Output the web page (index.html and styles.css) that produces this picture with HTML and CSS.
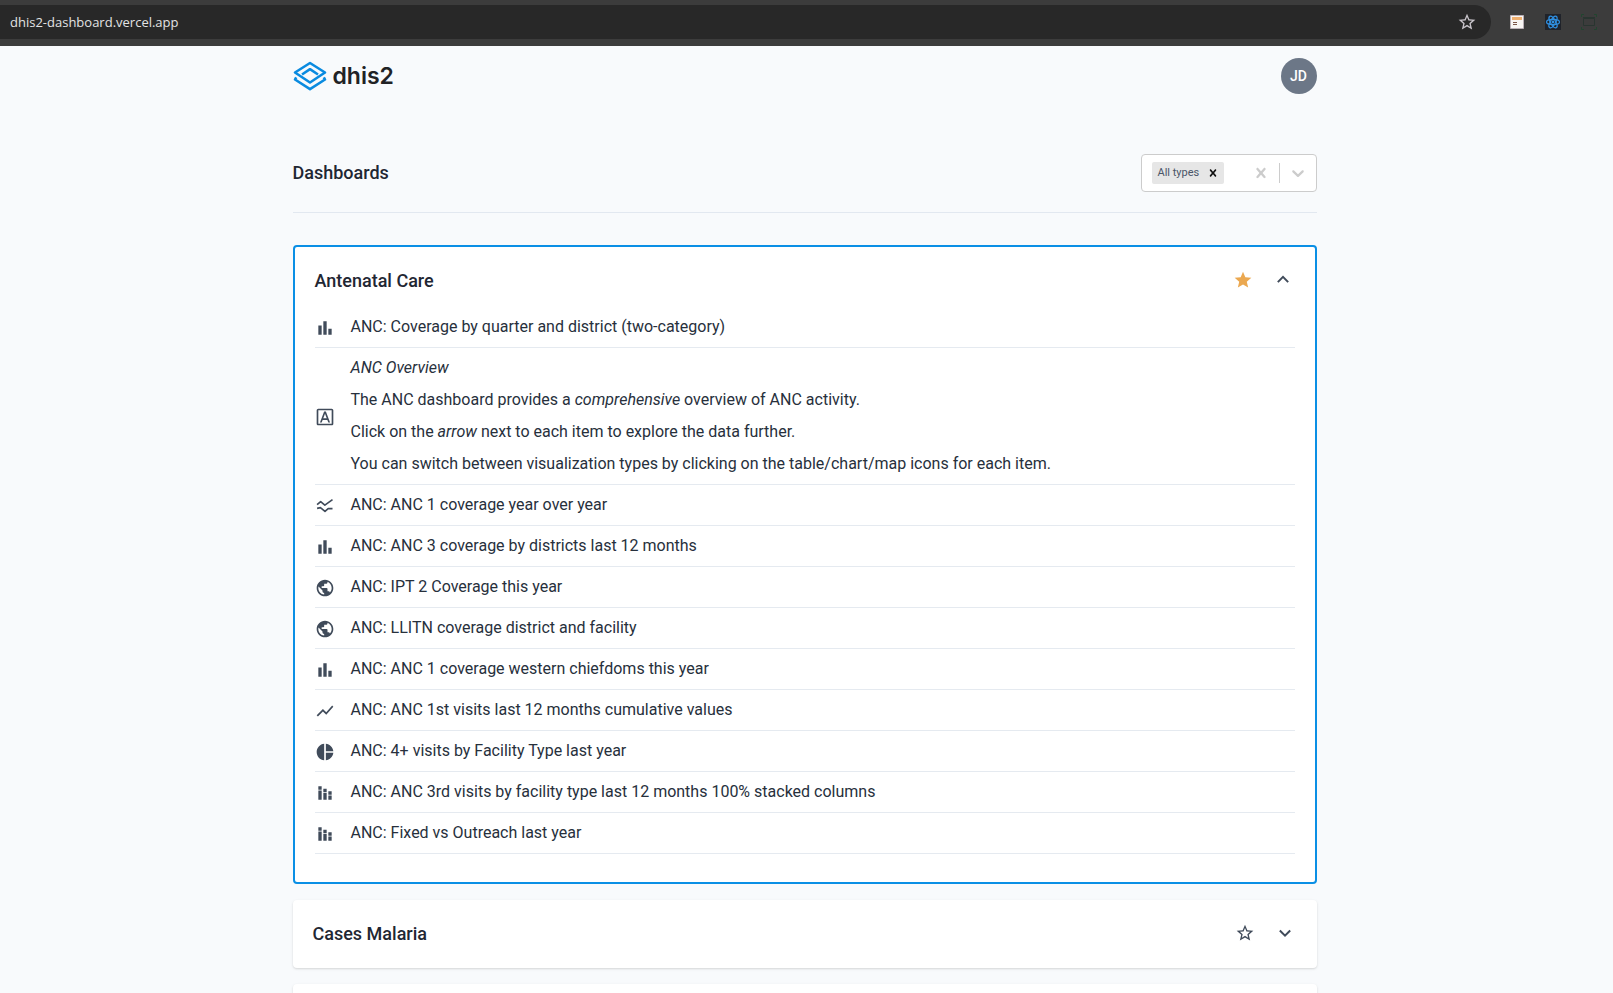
FILE: index.html
```
<!DOCTYPE html>
<html lang="en">
<head>
<meta charset="utf-8">
<title>Dashboards</title>
<link rel="stylesheet" href="styles.css">
</head>
<body>
<svg class="sprite" aria-hidden="true">
  <symbol id="bar" viewBox="0 0 24 24"><path d="M4 9h4v11H4zM16 13h4v7h-4zM10 4h4v16h-4z"/></symbol>
  <symbol id="text" viewBox="0 0 24 24"><path d="M20 4v16H4V4h16m0-2H4c-1.1 0-2 .9-2 2v16c0 1.100.900 2 2 2h16c1.100 0 2-.9 2-2V4c0-1.100-.9-2-2-2z"/><path d="M13.070 5.500h-2.140L5.960 18.500h2.090l1.140-3h5.640l1.140 3h2.090L13.070 5.500zM9.930 13.500L12 7.980l2.070 5.520z"/></symbol>
  <symbol id="multiline" viewBox="0 0 24 24"><path fill="none" stroke="currentColor" stroke-width="2" stroke-linejoin="round" d="M2.500 10.300L6.800 6.700l5 4.200L21 4.300M2.500 14.800l4-.8 5.500 4.500 3.800-3.300H21"/></symbol>
  <symbol id="globe" viewBox="0 0 24 24"><path d="M12 2C6.480 2 2 6.480 2 12s4.480 10 10 10 10-4.480 10-10S17.520 2 12 2zm-1 17.930c-3.950-.49-7-3.850-7-7.930 0-.62.08-1.210.21-1.790L9 15v1c0 1.100.9 2 2 2v1.930zm6.900-2.540c-.26-.81-1-1.390-1.900-1.390h-1v-3c0-.55-.45-1-1-1H8v-2h2c.55 0 1-.45 1-1V7h2c1.100 0 2-.9 2-2v-.41c2.930 1.190 5 4.060 5 7.410 0 2.080-.8 3.970-2.100 5.390z"/></symbol>
  <symbol id="line" viewBox="0 0 24 24"><path d="M3.500 18.490l6-6.010 4 4L22 6.920l-1.410-1.410-7.090 7.970-4-4L2 16.990z"/></symbol>
  <symbol id="pie" viewBox="0 0 24 24"><path d="M11 2v20c-5.070-.5-9-4.790-9-10s3.930-9.500 9-10zm2.030 0v8.990H22c-.47-4.740-4.240-8.520-8.970-8.990zm0 11.010V22c4.740-.47 8.500-4.250 8.970-8.990h-8.970z"/></symbol>
  <symbol id="stacked" viewBox="0 0 24 24"><path d="M4 9h4v11H4zM4 4h4v4H4zM10 7h4v4h-4zM16 10h4v4h-4zM16 15h4v5h-4zM10 12h4v8h-4z"/></symbol>
  <symbol id="star-full" viewBox="0 0 24 24"><path d="M12 17.270L18.180 21l-1.640-7.030L22 9.240l-7.190-.61L12 2 9.190 8.630 2 9.240l5.460 4.730L5.820 21z"/></symbol>
  <symbol id="star-line" viewBox="0 0 24 24"><path d="M22 9.240l-7.190-.62L12 2 9.190 8.630 2 9.240l5.460 4.730L5.820 21 12 17.270 18.180 21l-1.630-7.030L22 9.240zM12 15.400l-3.760 2.270 1-4.280-3.320-2.880 4.380-.38L12 6.100l1.710 4.040 4.380.38-3.320 2.880 1 4.280L12 15.400z"/></symbol>
  <symbol id="down" viewBox="0 0 24 24"><path fill="none" stroke="currentColor" stroke-width="2.400" d="M5.800 9l6.200 6.200L18.200 9"/></symbol>
  <symbol id="up" viewBox="0 0 24 24"><path fill="none" stroke="currentColor" stroke-width="2.400" d="M5.800 14.500L12 8.300l6.200 6.200"/></symbol>
  <symbol id="cross" viewBox="0 0 20 20"><path d="M14.348 14.849c-.469.469-1.229.469-1.697 0L10 11.819l-2.651 3.029c-.469.469-1.229.469-1.697 0-.469-.469-.469-1.229 0-1.697l2.758-3.150-2.759-3.152c-.469-.469-.469-1.228 0-1.697s1.228-.469 1.697 0L10 8.183l2.651-3.031c.469-.469 1.228-.469 1.697 0s.469 1.229 0 1.697l-2.758 3.152 2.758 3.150c.469.469.469 1.229 0 1.698z"/></symbol>
  <symbol id="caret" viewBox="0 0 20 20"><path d="M4.516 7.548c.436-.446 1.043-.481 1.576 0L10 11.295l3.908-3.747c.533-.481 1.141-.446 1.574 0 .436.445.408 1.197 0 1.615l-4.695 4.502c-.217.223-.502.335-.787.335s-.57-.112-.789-.335L4.516 9.163c-.409-.418-.436-1.170 0-1.615z"/></symbol>
</svg>

<div class="browser">
  <div class="address">
    <input class="url" type="text" aria-label="Address" value="dhis2-dashboard.vercel.app">
    <button class="plain" aria-label="Bookmark"><svg class="icon bookmark"><use href="#star-line"/></svg></button>
  </div>
  <div class="extensions">
    <button class="plain" aria-label="Notes"><svg class="ext" viewBox="0 0 16 16"><path fill="#f8f5f3" stroke="#b9afb5" d="M1.500 1.500h13v13h-13z"/><path fill="#f0b070" d="M3 3h10v3H3z"/><path fill="none" stroke="#7a5548" d="M4 8.500h4M4 10.500h4"/></svg></button>
    <button class="plain" aria-label="React tools"><svg class="ext" viewBox="0 0 16 16"><path fill="#20232a" d="M0 0h16v16H0z"/><g fill="none" stroke="#2f8fe0" stroke-width="1.200"><ellipse cx="8" cy="8" rx="6.500" ry="2.600"/><ellipse cx="8" cy="8" rx="6.500" ry="2.600" transform="rotate(60 8 8)"/><ellipse cx="8" cy="8" rx="6.500" ry="2.600" transform="rotate(120 8 8)"/></g><circle cx="8" cy="8" r="1.400" fill="#2f8fe0"/></svg></button>
    <button class="plain" aria-label="Capture"><svg class="ext" viewBox="0 0 16 16"><path fill="none" stroke="#293530" d="M2.500 4.500h11v7h-11zM2 3.500h12"/><path fill="none" stroke="#21452f" d="M.5 3V.5H3M13 .5h2.500V3M.5 13v2.500H3M13 15.500h2.500V13"/></svg></button>
  </div>
</div>

<div class="page">
  <header class="top">
    <a class="brand" href="#">
      <svg class="logo" viewBox="0 0 34 30" fill="none" stroke="#0a8be0" stroke-width="2.600" stroke-linejoin="round"><path d="M17 2L32 11.500 17 21.500 2 11.500z"/><path d="M9 13.500l8-5.300 8 5.300"/><path d="M3.200 16.300L2 18.500 17 28.200l15-9.700-1.200-2.200"/></svg>
      <span class="wordmark">dhis2</span>
    </a>
    <button class="avatar">JD</button>
  </header>

  <main>
    <div class="heading">
      <h1>Dashboards</h1>
      <div class="filter">
        <div class="tag">All types <button class="plain tag-x" aria-label="Remove All types"><svg class="cross"><use href="#cross"/></svg></button></div>
        <button class="plain clear" aria-label="Clear"><svg class="indicator"><use href="#cross"/></svg></button>
        <span class="bar"></span>
        <button class="plain clear" aria-label="Open types"><svg class="indicator"><use href="#caret"/></svg></button>
      </div>
    </div>

    <section class="card open">
      <div class="card-head">
        <h2>Antenatal Care</h2>
        <div class="actions">
          <button class="plain starred" aria-label="Unstar"><svg class="icon"><use href="#star-full"/></svg></button>
          <button class="plain" aria-label="Collapse"><svg class="icon"><use href="#up"/></svg></button>
        </div>
      </div>
      <ul class="items">
        <li><svg class="icon"><use href="#bar"/></svg><p>ANC: Coverage by quarter and district (two-category)</p></li>
        <li><svg class="icon"><use href="#text"/></svg><div class="note"><p><em>ANC Overview</em></p><p>The ANC dashboard provides a <em>comprehensive</em> overview of ANC activity.</p><p>Click on the <em>arrow</em> next to each item to explore the data further.</p><p>You can switch between visualization types by clicking on the table/chart/map icons for each item.</p></div></li>
        <li><svg class="icon"><use href="#multiline"/></svg><p>ANC: ANC 1 coverage year over year</p></li>
        <li><svg class="icon"><use href="#bar"/></svg><p>ANC: ANC 3 coverage by districts last 12 months</p></li>
        <li><svg class="icon"><use href="#globe"/></svg><p>ANC: IPT 2 Coverage this year</p></li>
        <li><svg class="icon"><use href="#globe"/></svg><p>ANC: LLITN coverage district and facility</p></li>
        <li><svg class="icon"><use href="#bar"/></svg><p>ANC: ANC 1 coverage western chiefdoms this year</p></li>
        <li><svg class="icon"><use href="#line"/></svg><p>ANC: ANC 1st visits last 12 months cumulative values</p></li>
        <li><svg class="icon"><use href="#pie"/></svg><p>ANC: 4+ visits by Facility Type last year</p></li>
        <li><svg class="icon"><use href="#stacked"/></svg><p>ANC: ANC 3rd visits by facility type last 12 months 100% stacked columns</p></li>
        <li><svg class="icon"><use href="#stacked"/></svg><p>ANC: Fixed vs Outreach last year</p></li>
      </ul>
    </section>

    <section class="card">
      <div class="card-head">
        <h2>Cases Malaria</h2>
        <div class="actions">
          <button class="plain" aria-label="Star"><svg class="icon"><use href="#star-line"/></svg></button>
          <button class="plain" aria-label="Expand"><svg class="icon"><use href="#down"/></svg></button>
        </div>
      </div>
    </section>

    <section class="card"><div class="card-head"></div></section>
  </main>
</div>
</body>
</html>
```
FILE: styles.css
```
* { box-sizing: border-box; }
body {
  margin: 0;
  height: 100vh;
  overflow: hidden;
  background: #f8fafc;
  color: #27303c;
  font-family: Roboto, sans-serif;
  font-size: 16px;
  line-height: 24px;
}
h1, h2, p, ul { margin: 0; padding: 0; }
h1, h2 { color: #1f2733; font-size: 18px; font-weight: 500; line-height: 28px; }
.sprite { display: none; }
.plain {
  display: flex;
  padding: 0;
  border: 0;
  background: none;
  color: inherit;
}
.icon { width: 20px; height: 20px; fill: currentColor; flex: none; }

.browser {
  display: flex;
  align-items: center;
  gap: 18px;
  height: 46px;
  padding: 5px 16px 7px 0;
  background: #3c3c3c;
}
.address {
  flex: 1;
  display: flex;
  align-items: center;
  height: 34px;
  padding: 0 14px 0 10px;
  border-radius: 0 17px 17px 0;
  background: #282828;
  color: #c9c5cb;
}
.url {
  flex: 1;
  padding: 0;
  border: 0;
  background: none;
  color: #e3e3e3;
  font: 13px/20px "Open Sans", sans-serif;
}
.extensions { display: flex; gap: 20px; }
.ext { width: 16px; height: 16px; }

.page {
  max-width: 1028px;
  margin: 0 auto;
  padding: 0 4px 0 0;
}
.top {
  display: flex;
  align-items: center;
  justify-content: space-between;
  height: 60px;
}
.brand {
  display: flex;
  align-items: center;
  gap: 6px;
  color: #212225;
  text-decoration: none;
}
.logo { width: 34px; height: 30px; }
.wordmark { font: 600 23px/28px Inter, sans-serif; }
.avatar {
  width: 36px;
  height: 36px;
  padding: 0;
  border: 0;
  border-radius: 50%;
  background: #6c7787;
  color: #fff;
  font: 500 14px/20px Roboto, sans-serif;
}

.heading {
  display: flex;
  align-items: center;
  justify-content: space-between;
  margin: 48px 0 32px;
  padding-bottom: 20px;
  border-bottom: 1px solid #e2e8f0;
}
.filter {
  display: flex;
  align-items: center;
  width: 176px;
  height: 38px;
  padding: 0 0 0 10px;
  border: 1px solid #ccc;
  border-radius: 4px;
  background: #fff;
}
.tag {
  display: flex;
  align-items: center;
  gap: 7px;
  height: 22px;
  margin-right: auto;
  padding: 0 4px 0 6px;
  border-radius: 2px;
  background: #e6e6e6;
  color: #4a5568;
  font-size: 11px;
}
.tag-x { color: #111; }
.cross { width: 14px; height: 14px; fill: currentColor; }
.clear { padding: 8px; color: #ccc; }
.indicator { width: 20px; height: 20px; fill: currentColor; }
.bar { width: 1px; height: 20px; background: #ccc; }

.card {
  margin-bottom: 16px;
  border-radius: 4px;
  background: #fff;
  box-shadow: 0 1px 3px rgba(0, 0, 0, .1), 0 1px 2px rgba(0, 0, 0, .06);
}
.card-head {
  display: flex;
  align-items: center;
  justify-content: space-between;
  min-height: 68px;
  padding: 20px;
}
.actions { display: flex; gap: 20px; padding: 0 2px 2px 0; color: #404b5a; }
.starred { color: #eba850; }
.open { border: 2px solid #0a8fe5; box-shadow: none; }
.open .card-head { padding: 20px 20px 12px; min-height: 60px; }
.items {
  padding: 0 20px 28px;
  list-style: none;
}
.items li {
  display: flex;
  align-items: center;
  gap: 16px;
  padding: 8px 0;
  border-bottom: 1px solid #e5eaf0;
}
.items .icon { margin-top: 2px; color: #404b5a; }
.note { display: grid; gap: 8px; }
```
